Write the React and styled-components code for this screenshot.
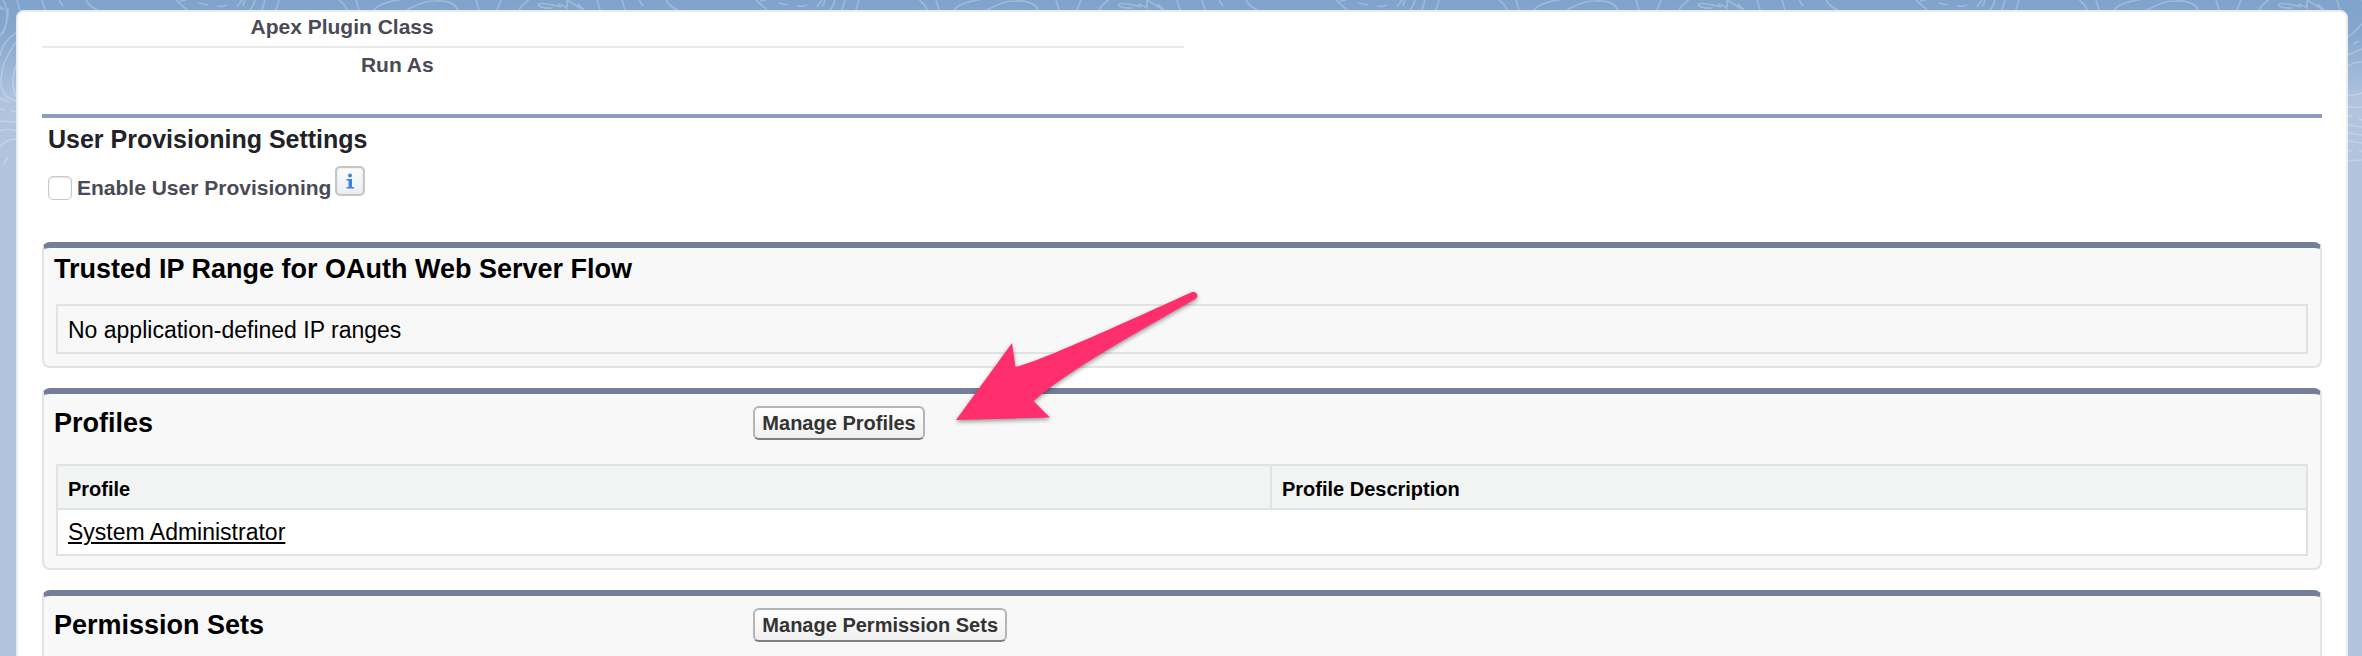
import React from "react";
import styled, { createGlobalStyle } from "styled-components";

const GlobalStyle = createGlobalStyle`
  *, *::before, *::after { box-sizing: border-box; }
  body { margin: 0; background: #b0c4df; font-family: "Liberation Sans", Arial, sans-serif; color: #000; }
  h2, h3, p, dl, dt, dd { margin: 0; }
`;

const Page = styled.div`
  position: relative;
  height: 100vh;
  overflow: hidden;
  padding: 10px 14px 0 16px;
  background: linear-gradient(#7fa3cb 0, #86a8cf 36px, #b0c4df 100px);
`;

const Contours = styled.svg`
  position: absolute;
  top: 0;
  ${(p) => (p.$side === "right" ? "right: 0;" : "left: 0;")}
  width: ${(p) => p.$width};
  height: ${(p) => p.$height};
  fill: none;
  stroke: #fff;
  stroke-opacity: 0.24;
  stroke-width: 1.7;
`;

const Card = styled.main`
  position: relative;
  min-height: 100%;
  padding: 0 24px;
  background: #fff;
  border: 2px solid #ebebeb;
  border-radius: 8px 8px 0 0;
`;

const DetailList = styled.dl`
  width: calc(50% + 2px);
`;

const DetailRow = styled.div`
  display: grid;
  grid-template-columns: 35% 1fr;
  padding: 3px 0 7px;
  & + & {
    padding: 5px 0;
    border-top: 2px solid #ebebeb;
  }
`;

const DetailLabel = styled.dt`
  padding-right: 8px;
  text-align: right;
  font-size: 21px;
  line-height: 24px;
  font-weight: bold;
  color: #4a4a56;
`;

const Section = styled.section`
  margin: 32px 0;
  padding: 7px 6px 0;
  border-top: 4px solid #8e9cbf;
`;

const SectionTitle = styled.h3`
  font-size: 25px;
  line-height: 28px;
  color: #222229;
`;

const CheckRow = styled.div`
  display: flex;
  align-items: center;
  height: 44px;
  margin-top: 13px;
`;

const CheckBox = styled.input`
  appearance: none;
  width: 24px;
  height: 24px;
  margin: 0 5px 0 0;
  background: #fff;
  border: 1px solid #c8c8c8;
  border-radius: 5px;
  box-shadow: inset 0 1px 2px #e2e2e2;
`;

const CheckLabel = styled.label`
  font-size: 21px;
  line-height: 24px;
  font-weight: bold;
  color: #4a4a56;
`;

const InfoButton = styled.button`
  display: flex;
  width: 30px;
  height: 30px;
  margin: 0 0 14px 4px;
  padding: 0;
  background: linear-gradient(#fcfcfd, #eceef3);
  border: 2px solid #c6c6c6;
  border-radius: 5px;
  box-shadow: inset 0 0 2px #d4d4d4;
`;

const Panel = styled.section`
  margin-bottom: 20px;
  padding-bottom: 12px;
  background: #f8f8f8;
  border: 2px solid #e2e3e3;
  border-top: 6px solid #747e98;
  border-radius: 8px;
`;

const PanelHeader = styled.header`
  display: flex;
  align-items: center;
  padding: ${(p) => (p.$compact ? "5px 10px 19px" : "12px 10px 24px")};
`;

const PanelTitle = styled.h2`
  flex: 0 0 ${(p) => (p.$wide ? "100%" : "31%")};
  font-size: 27px;
  line-height: 32px;
`;

const Actions = styled.div`
  position: relative;
`;

const ActionButton = styled.button`
  display: block;
  height: 34px;
  padding: 0 7px;
  background: linear-gradient(#fff, #f0f0f0);
  border: 2px solid #b5b5b5;
  border-bottom-color: #7f7f7f;
  border-radius: 6px;
  font: bold 20px/24px "Liberation Sans", Arial, sans-serif;
  color: #333;
`;

const EmptyMessage = styled.p`
  margin: 0 12px;
  padding: 11px 10px 9px;
  border: 2px solid #e0e3e2;
  font-size: 23px;
  line-height: 26px;
`;

const TableWrap = styled.div`
  padding: 0 12px;
`;

const Table = styled.table`
  width: 100%;
  table-layout: fixed;
  border: 2px solid #e0e3e2;
  border-spacing: 0;
  background: #fff;
`;

const HeadCell = styled.th`
  width: ${(p) => p.$width};
  padding: 11px 10px 7px;
  background: #f2f3f3;
  border-bottom: 2px solid #e0e3e2;
  text-align: left;
  font-size: 20px;
  line-height: 24px;
  &:not(:last-child) {
    border-right: 2px solid #e0e3e2;
  }
`;

const Cell = styled.td`
  padding: 9px 10px;
  font-size: 23px;
  line-height: 26px;
`;

const ProfileLink = styled.a`
  color: #000;
  text-decoration: underline;
  text-decoration-thickness: 2px;
  text-underline-offset: 2px;
`;

const ArrowMark = styled.svg`
  position: absolute;
  z-index: 1;
  left: calc(100% + 25px);
  top: -120px;
  width: 256px;
  height: 144px;
  pointer-events: none;
  filter: drop-shadow(0 2px 2px rgba(0, 0, 0, 0.4));
`;

function Backdrop() {
  return (
    <>
      <Contours $width="100%" $height="10px" aria-hidden="true">
        <defs>
          <pattern id="contours" x="-405" width="580" height="10" patternUnits="userSpaceOnUse">
            <path
              transform="translate(-175 0)"
              d="M176 0L187 10M180 1L186 0M198 3L208 5M217 6Q222 7 227 5M237 7L242 0M243 6L245 0M250 10Q254 5 255 0M262 10L265 0M276 10L279 0M339 0Q345 4 347 10M356 0L359 10M374 10C380 3 392 1 402 -1M407 10C418 4 425 1 435 1C448 0 456 4 458 10M476 0L479 10M497 10L501 0M519 10Q522 4 529 0M553 8C543 9 537 6 539 4C543 2 552 5 561 7C556 3 561 4 567 8L567 0M567 0L580 8L578 4L584 10M597 0L600 10M622 0L625 10M639 0L643 6M666 0Q670 7 678 10"
            />
          </pattern>
        </defs>
        <rect width="100%" height="10" fill="url(#contours)" stroke="none" />
      </Contours>
      <Contours $width="16px" $height="190px" aria-hidden="true">
        <path d="M3 0Q11 14 3 34M0 36Q9 24 8 8M16 33Q2 42 0 56M16 42C5 58 1 68 1 84C2 94 8 99 16 101M16 65Q10 84 16 96M0 98L9 102M0 109L5 110M11 111L16 112M0 121L16 122M0 131Q8 128 16 131M0 147Q6 139 16 139M3 165L8 157" />
      </Contours>
      <Contours $side="right" $width="14px" $height="190px" aria-hidden="true">
        <path d="M0 37Q7 32 14 24M5 44L11 41M0 55Q6 52 14 49M0 66Q5 62 14 62M0 95Q8 96 14 93M0 107Q7 108 14 107M0 115L4 117M11 119L14 120M0 125L14 127M0 133L14 135M0 141L14 143M0 150L4 151M11 151L14 151M0 161L14 160" />
      </Contours>
    </>
  );
}

function Arrow() {
  return (
    <ArrowMark viewBox="0 0 256 144" aria-hidden="true">
      <path
        fill="#ff2f6d"
        d="M6 134L62 57L65.500 81C88 76 165 41 241 6.500C246 4.500 249.500 9 246 12.500C185 48 120 83 83.500 115L100 131.500Z"
      />
    </ArrowMark>
  );
}

function RelatedPanel({ title, action, arrow, children }) {
  return (
    <Panel>
      <PanelHeader $compact={!action}>
        <PanelTitle $wide={!action}>{title}</PanelTitle>
        {action && (
          <Actions>
            <ActionButton type="button">{action}</ActionButton>
            {arrow && <Arrow />}
          </Actions>
        )}
      </PanelHeader>
      {children}
    </Panel>
  );
}

export default function App() {
  return (
    <Page>
      <GlobalStyle />
      <Backdrop />
      <Card>
        <DetailList>
          {["Apex Plugin Class", "Run As"].map((label) => (
            <DetailRow key={label}>
              <DetailLabel>{label}</DetailLabel>
              <dd />
            </DetailRow>
          ))}
        </DetailList>

        <Section>
          <SectionTitle>User Provisioning Settings</SectionTitle>
          <CheckRow>
            <CheckBox type="checkbox" id="provisioning" />
            <CheckLabel htmlFor="provisioning">Enable User Provisioning</CheckLabel>
            <InfoButton type="button" aria-label="Help">
              <svg width="26" height="26" viewBox="0 0 26 26" fill="#3c84dc" aria-hidden="true">
                <circle cx="13" cy="7.500" r="2" />
                <path d="M9.500 11H15V19H17V20.500H9.500V19H11.500V12.500H9.500Z" />
              </svg>
            </InfoButton>
          </CheckRow>
        </Section>

        <RelatedPanel title="Trusted IP Range for OAuth Web Server Flow">
          <EmptyMessage>No application-defined IP ranges</EmptyMessage>
        </RelatedPanel>

        <RelatedPanel title="Profiles" action="Manage Profiles" arrow>
          <TableWrap>
            <Table>
              <thead>
                <tr>
                  <HeadCell scope="col" $width="54%">Profile</HeadCell>
                  <HeadCell scope="col">Profile Description</HeadCell>
                </tr>
              </thead>
              <tbody>
                <tr>
                  <Cell><ProfileLink href="#profile">System Administrator</ProfileLink></Cell>
                  <Cell />
                </tr>
              </tbody>
            </Table>
          </TableWrap>
        </RelatedPanel>

        <RelatedPanel title="Permission Sets" action="Manage Permission Sets" />
      </Card>
    </Page>
  );
}
